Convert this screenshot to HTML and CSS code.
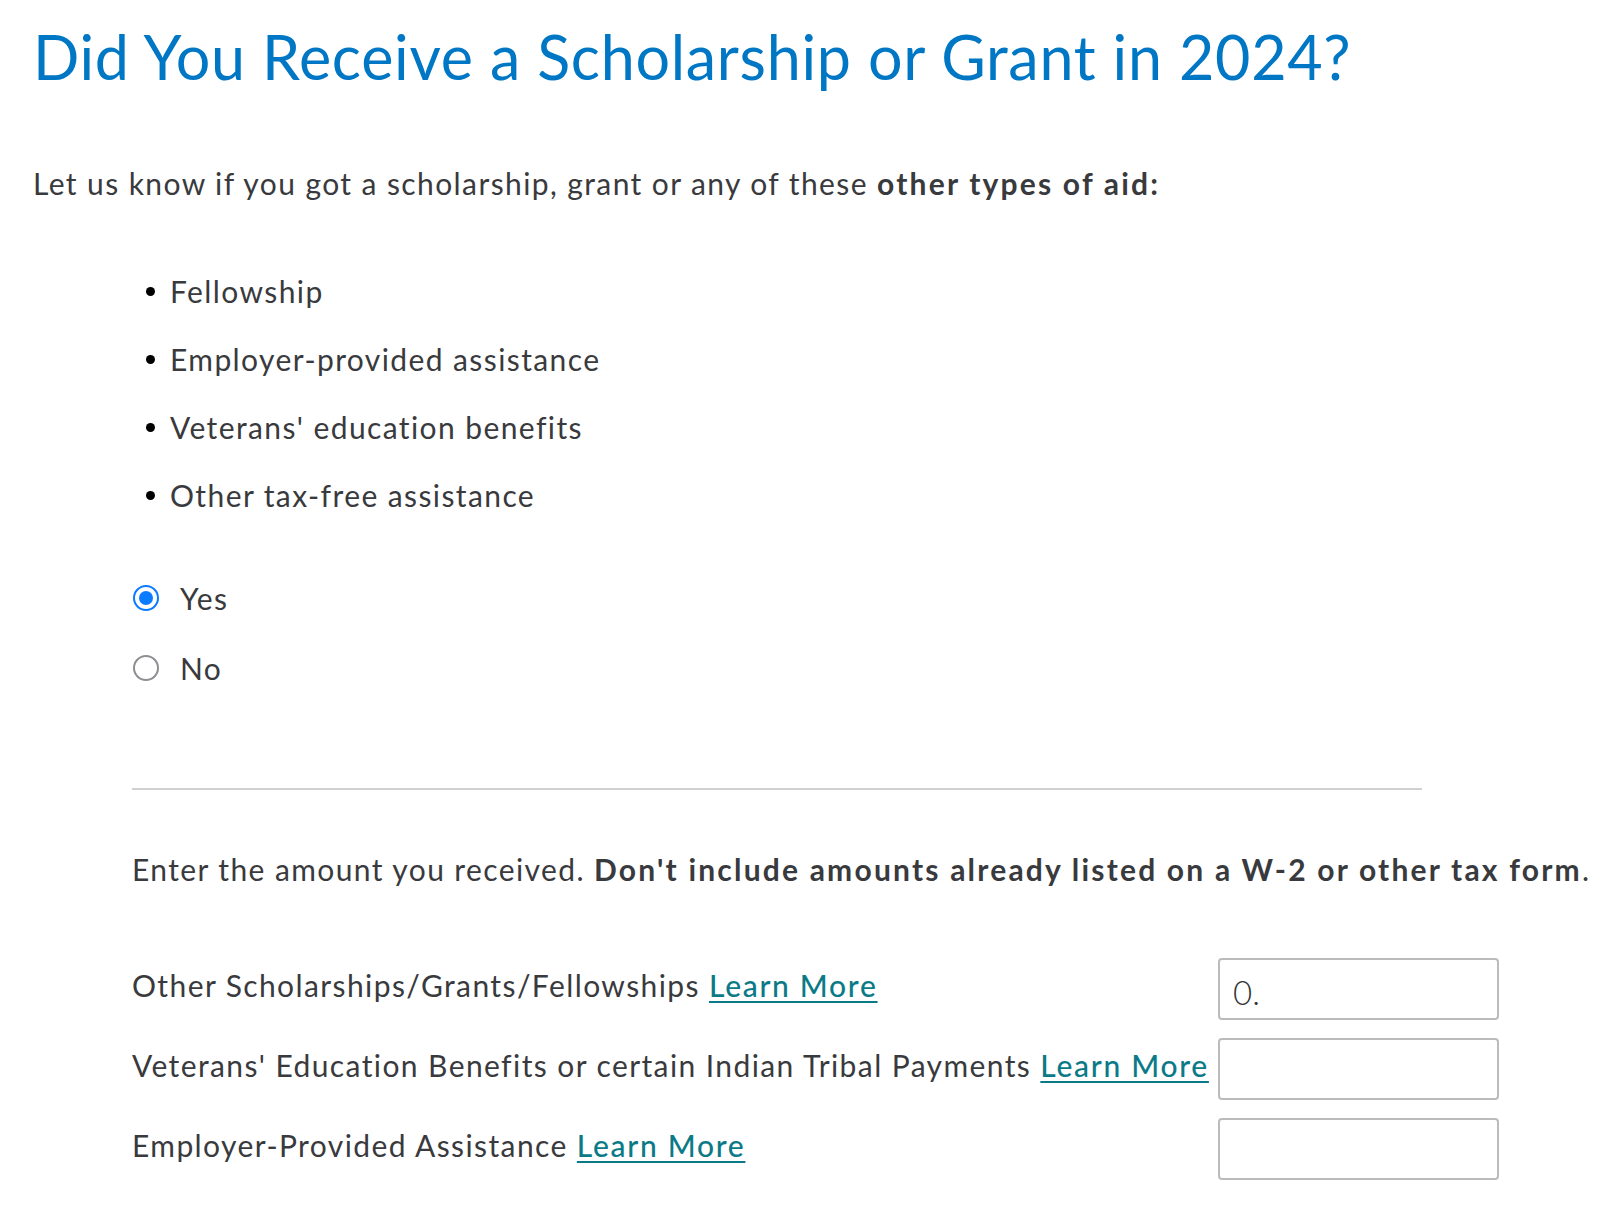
FILE: index.html
```html
<!DOCTYPE html>
<html lang="en">
<head>
<meta charset="utf-8">
<title>Scholarship or Grant</title>
<link rel="stylesheet" href="styles.css">
</head>
<body>
<main class="page">
  <h1 class="title">Did You Receive a Scholarship or Grant in 2024?</h1>
  <p class="intro">Let us know if you got a scholarship, grant or any of these <strong>other types of aid:</strong></p>
  <ul class="aid-list">
    <li>Fellowship</li>
    <li>Employer-provided assistance</li>
    <li>Veterans' education benefits</li>
    <li>Other tax-free assistance</li>
  </ul>
  <div class="radios">
    <label class="radio-row"><input type="radio" name="aid" class="radio" checked><span>Yes</span></label>
    <label class="radio-row"><input type="radio" name="aid" class="radio"><span>No</span></label>
  </div>
  <section class="amounts">
    <hr class="divider">
    <p class="enter">Enter the amount you received. <strong>Don't include amounts already listed on a W-2 or other tax form</strong>.</p>
    <div class="rows">
      <div class="row">
        <span class="label">Other Scholarships/Grants/Fellowships <a href="#" class="link">Learn More</a></span>
        <input class="amount" type="text" value="0.">
      </div>
      <div class="row">
        <span class="label">Veterans' Education Benefits or certain Indian Tribal Payments <a href="#" class="link">Learn More</a></span>
        <input class="amount" type="text" value="">
      </div>
      <div class="row">
        <span class="label">Employer-Provided Assistance <a href="#" class="link">Learn More</a></span>
        <input class="amount" type="text" value="">
      </div>
    </div>
  </section>
</main>
</body>
</html>
```
FILE: styles.css
```css
* { box-sizing: border-box; }
html, body { margin: 0; padding: 0; background: #ffffff; }
body {
  font-family: "Lato", "Open Sans", sans-serif;
  color: #393a3d;
  font-size: 30px;
  line-height: 40px;
  letter-spacing: 1.4px;
}
.page {
  padding-left: 33px;
}
.title {
  margin: 21px 0 0 0;
  font-size: 61px;
  line-height: 72px;
  font-weight: 400;
  letter-spacing: 0.7px;
  color: #0077c5;
}
.intro {
  margin: 70px 0 0 0;
  white-space: nowrap;
}
.intro strong, .enter strong {
  font-weight: 700;
  letter-spacing: 2.2px;
}
.aid-list {
  list-style: none;
  margin: 68px 0 0 113px;
  padding: 0;
  display: flex;
  flex-direction: column;
  gap: 28px;
}
.aid-list li {
  display: flex;
  align-items: center;
}
.aid-list li::before {
  content: "";
  width: 9px;
  height: 9px;
  border-radius: 50%;
  background: #000;
  margin-right: 15px;
  flex: none;
}
.radios {
  margin: 63px 0 0 100px;
  display: flex;
  flex-direction: column;
  gap: 30px;
}
.radio-row {
  display: flex;
  align-items: center;
  height: 40px;
}
.radio {
  appearance: none;
  -webkit-appearance: none;
  margin: 0 21px 0 0;
  width: 26px;
  height: 26px;
  border-radius: 50%;
  border: 2px solid #8e8e93;
  background: #fff;
  flex: none;
  display: grid;
  place-items: center;
}
.radio:checked {
  border-color: #0a7cff;
}
.radio:checked::after {
  content: "";
  width: 14px;
  height: 14px;
  border-radius: 50%;
  background: #0a7cff;
}
.amounts {
  margin-left: 99px;
}
.divider {
  margin: 100px 0 0 0;
  width: 1290px;
  border: 0;
  height: 2px;
  background: #d0d0d0;
}
.enter {
  margin: 59px 0 0 0;
  white-space: nowrap;
}
.rows {
  margin-top: 69px;
  display: flex;
  flex-direction: column;
  gap: 18px;
}
.row {
  display: grid;
  grid-template-columns: 1078px 281px;
  column-gap: 8px;
  align-items: center;
}
.label {
  white-space: nowrap;
  padding-bottom: 9px;
}
.link {
  color: #0b7a87;
  text-decoration: underline;
  text-underline-offset: 4px;
  text-decoration-thickness: 2px;
  font-weight: 500;
  letter-spacing: 1.7px;
}
.amount {
  height: 62px;
  width: 281px;
  border: 2px solid #bbbbbb;
  border-radius: 4px;
  padding: 6px 13px 0;
  font-family: "Lato", sans-serif;
  font-weight: 300;
  letter-spacing: 0;
  font-size: 33px;
  color: #333;
  background: #fff;
  outline: none;
}
```
